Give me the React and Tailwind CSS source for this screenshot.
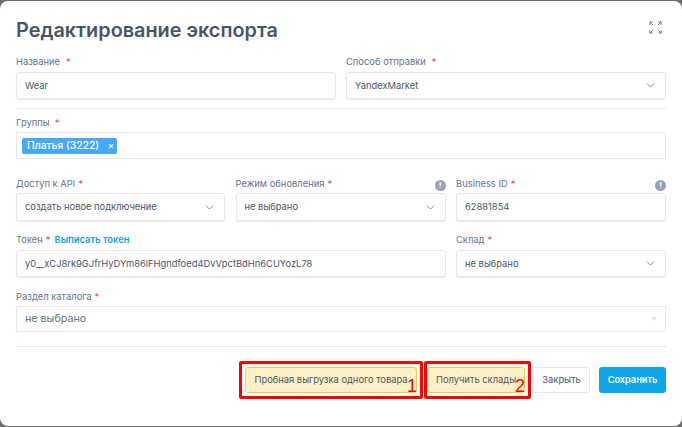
import React from "react";
import { ChevronDown } from "lucide-react";

const Label = ({ text, gap = "ml-[3px]", mb = "mb-[3px]", children }) => (
  <div className={`flex items-center h-[14px] pt-[1px] ${mb} text-[9.4px] leading-[14px] text-[#64748b]`}>
    <span>{text}</span>
    <span className={`${gap} text-[#f43f5e]`}>*</span>
    {children}
  </div>
);

const Info = () => (
  <span className="ml-auto mt-[3px] flex items-center justify-center w-[11px] h-[11px] rounded-full bg-[#94a3b8] text-white text-[8px] leading-none font-bold">
    !
  </span>
);

const Field = ({ value, select, h = "h-[27px]" }) => (
  <div className={`flex items-center justify-between ${h} px-[8px] bg-white border border-[#e2e8f0] rounded-[3px] shadow-[0_1px_1px_rgba(148,163,184,0.2)] text-[9.35px] text-[#475569]`}>
    <span className="pt-[1px]">{value}</span>
    {select && <ChevronDown size={13} strokeWidth={1.5} className="text-[#64748b]" />}
  </div>
);

const ExpandIcon = () => (
  <svg width="13" height="13" viewBox="0 0 14 14" fill="none" stroke="#64748b" strokeWidth="1">
    <path d="M1 4V1h3M1 1l3.5 3.5" />
    <path d="M13 4V1h-3M13 1L9.5 4.5" />
    <path d="M1 10v3h3M1 13l3.5-3.5" />
    <path d="M13 10v3h-3M13 13L9.5 9.5" />
  </svg>
);

export default function App() {
  return (
    <div className="w-[682px] h-[427px] bg-[#6b6f73] pt-[1px] pb-[1px] font-['Inter',sans-serif] overflow-hidden">
      <div className="relative h-[425px] bg-white rounded-[8px] px-[16px]">
        {/* Header */}
        <div className="flex items-center justify-between pt-[4px] h-[53px]">
          <h1 className="text-[19.85px] leading-[26px] font-semibold text-[#475569]">Редактирование экспорта</h1>
          <span className="mr-[4px] -mt-[4px]">
            <ExpandIcon />
          </span>
        </div>

        {/* Name and transport */}
        <div className="grid grid-cols-2 gap-x-[10px]">
          <div>
            <Label text="Название" gap="ml-[6px]" mb="mb-[4px]" />
            <Field value="Wear" />
          </div>
          <div>
            <Label text="Способ отправки" gap="ml-[6px]" mb="mb-[4px]" />
            <Field value="YandexMarket" select />
          </div>
        </div>
        <div className="h-px bg-[#e2e8f0] mt-[9px] mb-[6px]" />

        {/* Groups */}
        <Label text="Группы" gap="ml-[5px]" />
        <div className="flex items-center h-[27px] px-[5px] border border-[#e2e8f0]">
          <span className="flex items-center justify-between w-[95px] h-[16px] pl-[5px] pr-[3px] bg-[#46a9f5] rounded-[2px] text-[10.3px] font-medium text-white">
            <span>Платья (3222)</span>
            <span className="text-[9px] leading-none">×</span>
          </span>
        </div>

        {/* API row */}
        <div className="grid grid-cols-[209px_210px_210px] gap-x-[10.5px] mt-[17px]">
          <div>
            <Label text="Доступ к API" />
            <Field value="создать новое подключение" select h="h-[28px]" />
          </div>
          <div>
            <Label text="Режим обновления">
              <Info />
            </Label>
            <Field value="не выбрано" select h="h-[28px]" />
          </div>
          <div>
            <Label text="Business ID">
              <Info />
            </Label>
            <Field value="62881854" h="h-[28px]" />
          </div>
        </div>

        {/* Token row */}
        <div className="grid grid-cols-[430px_210px] gap-x-[10px] mt-[11px]">
          <div>
            <Label text="Токен" mb="mb-[4px]">
              <span className="ml-[4px] font-semibold text-[#0ea5e9]">Выписать токен</span>
            </Label>
            <Field value="y0__xCJ8rk9GJfrHyDYm86lFHgndfoed4DvVpctBdHn6CUYozL78" />
          </div>
          <div>
            <Label text="Склад" mb="mb-[4px]" />
            <Field value="не выбрано" select />
          </div>
        </div>

        {/* Catalog */}
        <div className="mt-[12px]">
          <Label text="Раздел каталога" />
          <div className="flex items-center justify-between h-[26px] px-[8px] border border-[#e2e8f0] text-[10.7px] text-[#64748b]">
            <span>не выбрано</span>
            <span className="w-0 h-0 border-x-[3px] border-x-transparent border-t-[4px] border-t-[#dfe3e8]" />
          </div>
        </div>
        <div className="h-px bg-[#e2e8f0] mt-[14px]" />

        {/* Footer */}
        <div className="flex justify-end items-center mt-[20px] h-[26px]">
          <button className="relative w-[172px] h-[26px] bg-[#fdf1c5] border border-[#f5c84c] rounded-[3px] text-[9.35px] text-[#475569] whitespace-nowrap">
            Пробная выгрузка одного товара
            <span className="absolute -left-[7px] -top-[7px] w-[184px] h-[38px] border-[3px] border-[#ff0000] rounded-[2px]" />
            <span className="absolute -right-[1px] top-[7px] text-[18px] leading-[22px] text-[#ff0000] font-['Liberation_Sans',sans-serif]">1</span>
          </button>
          <button className="relative w-[98px] h-[26px] ml-[10px] bg-[#fdf1c5] border border-[#f5c84c] rounded-[3px] text-[9.35px] text-[#475569] whitespace-nowrap">
            Получить склады
            <span className="absolute -left-[4px] -top-[7px] w-[107px] h-[38px] border-[3px] border-[#ff0000] rounded-[2px]" />
            <span className="absolute -right-[1px] top-[7px] text-[18px] leading-[22px] text-[#ff0000] font-['Liberation_Sans',sans-serif]">2</span>
          </button>
          <button className="w-[57px] h-[26px] ml-[8px] bg-white border border-[#e2e8f0] rounded-[3px] text-[9.35px] text-[#475569]">
            Закрыть
          </button>
          <button className="w-[67px] h-[26px] ml-[9px] bg-[#0ea5e9] rounded-[3px] text-[9.2px] font-semibold text-white">
            Сохранить
          </button>
        </div>
      </div>
    </div>
  );
}
